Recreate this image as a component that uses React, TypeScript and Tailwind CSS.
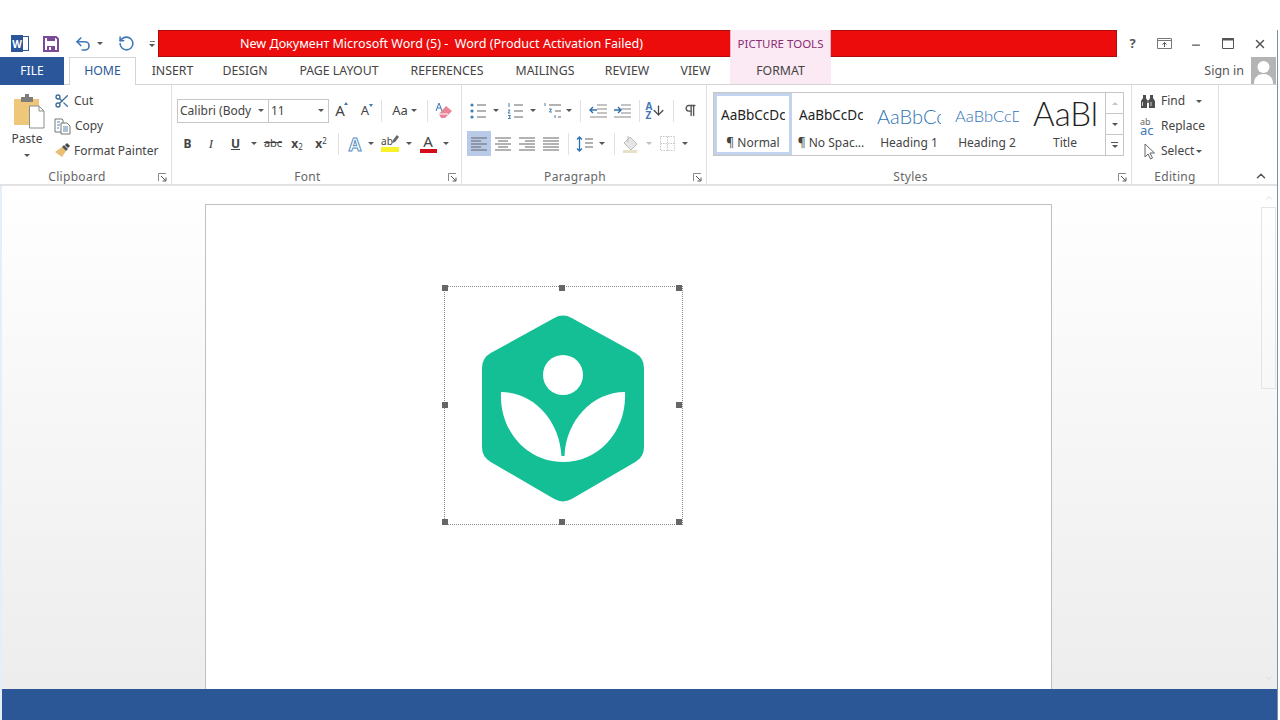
import React from 'react';
import { Undo2, RotateCcw, Minus, X, ChevronUp, ChevronDown, Scissors, Pilcrow, ArrowDown } from 'lucide-react';

const tabs = [
  { name: 'INSERT', w: 'w-[73px]' },
  { name: 'DESIGN', w: 'w-[72px]' },
  { name: 'PAGE LAYOUT', w: 'w-[116px]' },
  { name: 'REFERENCES', w: 'w-[100px]' },
  { name: 'MAILINGS', w: 'w-[96px]' },
  { name: 'REVIEW', w: 'w-[68px]' },
  { name: 'VIEW', w: 'w-[69px]' },
];

const Caret = ({ light = false }: { light?: boolean }) => (
  <span className={`inline-block h-0 w-0 border-x-[3px] border-t-[3px] border-x-transparent ${light ? 'border-t-[#c0c0c0]' : 'border-t-[#555]'}`} />
);

const Cell = ({ w, children, className = '' }: { w: string; children?: React.ReactNode; className?: string }) => (
  <div className={`flex h-[25px] shrink-0 items-center justify-center ${w} ${className}`}>{children}</div>
);

const Sep = ({ className = '' }: { className?: string }) => <div className={`h-[22px] w-px shrink-0 bg-[#e1e1e1] ${className}`} />;

const Launcher = () => (
  <svg width="9" height="9" viewBox="0 0 9 9" className="shrink-0">
    <path d="M0.5 8V0.5H8" fill="none" stroke="#8a8a8a" />
    <path d="M3 3L7.5 7.5M8 4.5V8H4.5" fill="none" stroke="#555" />
  </svg>
);

const GroupLabel = ({ label, className = '' }: { label: string; className?: string }) => (
  <div className={`relative -mb-[2px] mt-auto flex h-[18px] items-center justify-center text-[12px] tracking-[0.3px] text-[#666] ${className}`}>
    {label}
    <span className="absolute right-[4px] top-[5px] flex"><Launcher /></span>
  </div>
);

// paragraph icons, all on a 20x18 box
const Lines = ({ kind }: { kind: 'bullet' | 'number' | 'multi' | 'outdent' | 'indent' }) => (
  <svg width="20" height="18" viewBox="0 0 20 18">
    {kind === 'bullet' && (
      <>
        <circle cx="3" cy="3" r="1.6" fill="#3f7fb5" />
        <circle cx="3" cy="9" r="1.6" fill="#3f7fb5" />
        <circle cx="3" cy="15" r="1.6" fill="#3f7fb5" />
        <path d="M8 3h9M8 9h9M8 15h9" stroke="#666" strokeWidth="1.2" />
      </>
    )}
    {kind === 'number' && (
      <>
        <path d="M3 1v4M2 8h2l-2 3h2.4M2 13.5h2.4l-1 1.5 1 1.5H2" stroke="#3f7fb5" strokeWidth="1" fill="none" />
        <path d="M8 3h9M8 9h9M8 15h9" stroke="#666" strokeWidth="1.2" />
      </>
    )}
    {kind === 'multi' && (
      <>
        <path d="M2 1v3M6 7h2.5l-2 3h2.5M12 13v3" stroke="#3f7fb5" strokeWidth="1" fill="none" />
        <path d="M6 3h12M12 9h6M15 15h3" stroke="#666" strokeWidth="1.2" />
      </>
    )}
    {kind === 'outdent' && (
      <>
        <path d="M9 3h10M9 7h10M9 11h10M2 15h17" stroke="#888" strokeWidth="1.1" />
        <path d="M9 8H2M5 5L2 8l3 3" stroke="#2f6fb0" strokeWidth="1.4" fill="none" />
      </>
    )}
    {kind === 'indent' && (
      <>
        <path d="M9 3h10M9 7h10M9 11h10M2 15h17" stroke="#888" strokeWidth="1.1" />
        <path d="M2 8h7M6 5l3 3-3 3" stroke="#2f6fb0" strokeWidth="1.4" fill="none" />
      </>
    )}
  </svg>
);

const alignPaths = {
  left: 'M2 3h16M2 6h10M2 9h16M2 12h10M2 15h16',
  center: 'M2 3h16M5 6h10M2 9h16M5 12h10M2 15h16',
  right: 'M2 3h16M8 6h10M2 9h16M8 12h10M2 15h16',
  justify: 'M2 3h16M2 6h16M2 9h16M2 12h16M2 15h16',
};

const Align = ({ kind }: { kind: keyof typeof alignPaths }) => (
  <svg width="20" height="18" viewBox="0 0 20 18">
    <path d={alignPaths[kind]} stroke="#666" strokeWidth="1.1" />
  </svg>
);

const WordLogo = () => (
  <div className="relative h-[17px] w-[18px]">
    <div className="absolute right-0 top-[1px] h-[15px] w-[12px] border border-[#2b579a] bg-white" />
    <div className="absolute left-0 top-0 flex h-[17px] w-[12px] items-center justify-center bg-[#2b579a] text-[10px] font-bold leading-none text-white">W</div>
  </div>
);

const SaveIcon = () => (
  <svg width="16" height="16" viewBox="0 0 16 16">
    <path d="M1 1h12l2 2v12H1z" fill="#fff" stroke="#7a4a96" strokeWidth="2" />
    <path d="M4 1h8v4H4z" fill="#7a4a96" />
    <path d="M4 10h8v5H4z" fill="#7a4a96" />
    <path d="M6 11h2v3H6z" fill="#fff" />
  </svg>
);

const PasteIcon = () => (
  <svg width="33" height="36" viewBox="0 0 33 36">
    <path d="M1 6h25v26H1z" fill="#eec77b" />
    <path d="M8 4h4V1h4v3h4v5H8z" fill="#7d7d7d" />
    <path d="M16.5 13H26l5 5v17H16.5z" fill="#fff" stroke="#8c8c8c" />
    <path d="M26 13v5h5" fill="none" stroke="#8c8c8c" />
  </svg>
);

const CopyIcon = () => (
  <svg width="17" height="17" viewBox="0 0 17 17">
    <path d="M1 1h7l1 1v12H1z" fill="#fff" stroke="#777" />
    <path d="M7 5h6l3 3v8H7z" fill="#fff" stroke="#777" />
    <path d="M3 4h3M3 7h3M3 10h2M9 9h5M9 11h5M9 13h5" stroke="#5b84ad" />
  </svg>
);

const BrushIcon = () => (
  <svg width="17" height="16" viewBox="0 0 17 16">
    <path d="M8 4l4 4-4 6-7-5z" fill="#e8bf75" />
    <path d="M8 4l4 4 2-2-4-4z" fill="#555" />
    <path d="M11 2l2-2 3 3-2 2z" fill="#444" />
  </svg>
);

const Binoculars = () => (
  <svg width="16" height="15" viewBox="0 0 16 15">
    <path d="M3 1h3v3l1 2v8H1V7l2-3zM10 1h3v3l2 3v7H9V6l1-2z" fill="#4e4e4e" />
    <path d="M7 6h2v3H7z" fill="#777" />
    <path d="M2.5 8v4M11 8v4" stroke="#cfcfcf" />
  </svg>
);

const Cursor = () => (
  <svg width="12" height="17" viewBox="0 0 12 17">
    <path d="M1 1v13l3-3 2.5 5 2-1-2.5-5h4.5z" fill="#fff" stroke="#666" />
  </svg>
);

const Handle = ({ className }: { className: string }) => <span className={`absolute h-[6px] w-[6px] bg-[#666] ${className}`} />;

const styleItems = [
  { sample: 'AaBbCcDc', name: '¶ Normal', sampleClass: 'text-[13.5px] text-[#222]', selected: true },
  { sample: 'AaBbCcDc', name: '¶ No Spac...', sampleClass: 'text-[13.5px] text-[#222]' },
  { sample: 'AaBbCc', name: 'Heading 1', sampleClass: "font-['Lato',sans-serif] font-light text-[20px] text-[#2e74b5]" },
  { sample: 'AaBbCcD', name: 'Heading 2', sampleClass: "font-['Lato',sans-serif] font-light text-[16.5px] text-[#2e74b5]" },
  { sample: 'AaBl', name: 'Title', sampleClass: "font-['Lato',sans-serif] font-light text-[33px] -mt-[5px] text-[#222]" },
];

export default function App() {
  return (
    <div className="relative flex h-[720px] w-[1280px] flex-col overflow-hidden bg-white font-['Noto_Sans','Open_Sans',sans-serif] text-[12px] text-[#444]">
      <div className="h-[30px] shrink-0" />

      {/* title row */}
      <div className="flex h-[27px] shrink-0">
        <div className="flex w-[158px] shrink-0 items-center pl-[11px]">
          <WordLogo />
          <div className="ml-[14px]"><SaveIcon /></div>
          <Undo2 size={18} strokeWidth={2.2} className="ml-[15px] text-[#3f78b5]" />
          <span className="ml-[5px] flex"><Caret /></span>
          <RotateCcw size={17} strokeWidth={2.2} className="ml-[15px] text-[#3f78b5]" />
          <div className="ml-[14px] flex flex-col items-center gap-[2px]">
            <span className="h-px w-[5px] bg-[#777]" />
            <Caret />
          </div>
        </div>
        <div className="flex w-[959px] shrink-0 border border-[#b00c0c] bg-[#ec0c0c] text-white">
          <div className="flex w-[571px] shrink-0 items-center whitespace-pre pl-[81px] pt-px text-[12.55px]">
            New Документ Microsoft Word (5) -  Word (Product Activation Failed)
          </div>
          <div className="-my-px flex w-[101px] shrink-0 items-center justify-center border-x border-[#d9b8cf] bg-[#fbe9f3] text-[11.5px] text-[#8a2d73]">PICTURE TOOLS</div>
        </div>
        <div className="flex flex-1 items-center text-[#555]">
          <Cell w="w-[31px]"><span className="text-[13px] font-bold">?</span></Cell>
          <Cell w="w-[32px]">
            <svg width="15" height="11" viewBox="0 0 15 11"><path d="M.5.5h14v10H.5z" fill="none" stroke="#777" /><path d="M.5 2.5h14" stroke="#777" /><path d="M7.5 9V4.5M5.5 6.5l2-2 2 2" fill="none" stroke="#555" /></svg>
          </Cell>
          <Cell w="w-[31px]"><Minus size={12} strokeWidth={2.5} className="translate-y-[1px]" /></Cell>
          <Cell w="w-[33px]">
            <svg width="12" height="11" viewBox="0 0 12 11"><path d="M.5.5h11v10H.5z" fill="none" stroke="#555" /><path d="M0 1.5h12" stroke="#555" strokeWidth="2" /></svg>
          </Cell>
          <Cell w="w-[31px]"><X size={14} strokeWidth={2.5} /></Cell>
        </div>
      </div>

      {/* tabs */}
      <div className="flex h-[28px] shrink-0 border-b border-[#d4d4d4] text-[12.3px]">
        <div className="flex h-[28px] w-[64px] items-center justify-center bg-[#2b579a] text-[12px] text-white">FILE</div>
        <div className="z-10 ml-[5px] flex h-[28px] w-[67px] items-center justify-center border-x border-t border-[#d4d4d4] bg-white text-[#2b579a]">HOME</div>
        {tabs.map((t) => (
          <div key={t.name} className={`flex items-center justify-center pt-px text-[#444] ${t.w}`}>{t.name}</div>
        ))}
        <div className="flex h-[27px] w-[101px] items-center justify-center bg-[#fbe9f3] pt-[2px] text-[#444]">FORMAT</div>
        <div className="flex flex-1 items-center justify-end">
          <span className="mr-[7px] pt-[2px] text-[12.5px] text-[#555]">Sign in</span>
          <div className="mr-[4px] h-[27px] w-[25px] overflow-hidden bg-[#b4b4b4]">
            <svg width="25" height="27" viewBox="0 0 25 27"><circle cx="12.5" cy="10" r="6" fill="#fff" /><path d="M3 27c0-7 4-10 9.5-10S22 20 22 27z" fill="#fff" /></svg>
          </div>
        </div>
      </div>

      {/* ribbon */}
      <div className="flex h-[101px] shrink-0 border-b-2 border-[#e2e2e2]">
        {/* clipboard */}
        <div className="flex w-[172px] shrink-0 flex-col border-r border-[#e1e1e1]">
          <div className="flex">
            <div className="flex w-[54px] shrink-0 flex-col items-center pt-[8px]">
              <span className="ml-[5px] flex"><PasteIcon /></span>
              <span className="mt-[2px] leading-[16px]">Paste</span>
              <span className="mt-[7px] flex"><Caret /></span>
            </div>
            <div className="flex flex-col gap-[5px] pt-[6px]">
              <div className="flex h-[20px] items-center gap-[4px]"><Scissors size={16} className="text-[#3e6c9a]" /><span>Cut</span></div>
              <div className="flex h-[20px] items-center gap-[4px]"><CopyIcon /><span>Copy</span></div>
              <div className="flex h-[20px] items-center gap-[3px]"><BrushIcon /><span>Format Painter</span></div>
            </div>
          </div>
          <GroupLabel label="Clipboard" className="pr-[17px]" />
        </div>

        {/* font */}
        <div className="flex w-[290px] shrink-0 flex-col border-r border-[#e1e1e1]">
          <div className="flex items-center pl-[5px] pt-[13px]">
            <div className="flex h-[24px] w-[92px] shrink-0 items-center justify-between border border-[#c6c6c6] pl-[2px] pr-[4px]">Calibri (Body<Caret /></div>
            <div className="-ml-px flex h-[24px] w-[61px] shrink-0 items-center justify-between border border-[#c6c6c6] pl-[2px] pr-[4px]">11<Caret /></div>
            <Cell w="w-[24px]"><span className="relative -translate-x-[1px] text-[15px]">A<span className="absolute -right-[3px] top-[3px] h-0 w-0 border-x-[2.5px] border-b-[3px] border-x-transparent border-b-[#3f78b5]" /></span></Cell>
            <Cell w="w-[24px]"><span className="relative text-[13px]">A<span className="absolute -right-[4px] top-[3px] h-0 w-0 border-x-[2.5px] border-t-[3px] border-x-transparent border-t-[#3f78b5]" /></span></Cell>
            <Sep className="ml-[4px]" />
            <Cell w="w-[33px]" className="ml-[6px] gap-[3px]"><span className="text-[13px]">Aa</span><Caret /></Cell>
            <Sep className="ml-[6px]" />
            <Cell w="w-[32px]">
              <svg width="18" height="17" viewBox="0 0 18 17"><path d="M4 12L11 4l6 5-7 7H6z" fill="#e98598" /><path d="M4 12h9" stroke="#fff" /><path d="M1 9L4 1l3 8M2 6h4" fill="none" stroke="#3f78b5" /></svg>
            </Cell>
          </div>
          <div className="mt-[8px] flex items-center pl-[4px]">
            <Cell w="w-[23px]"><b>B</b></Cell>
            <Cell w="w-[24px]"><i className="font-['Liberation_Serif',serif] text-[13px]">I</i></Cell>
            <Cell w="w-[25px]"><b className="underline">U</b></Cell>
            <Cell w="w-[12px]"><Caret /></Cell>
            <Cell w="w-[24px]" className="ml-px"><span className="text-[11px] line-through">abc</span></Cell>
            <Cell w="w-[24px]"><b className="text-[12px]">x<sub className="text-[8px] font-normal">2</sub></b></Cell>
            <Cell w="w-[24px]"><b className="text-[12px]">x<sup className="text-[8px] font-normal">2</sup></b></Cell>
            <Sep className="ml-[5px]" />
            <Cell w="w-[22px]" className="ml-[5px]"><span className="text-[18px] font-bold leading-none text-white [-webkit-text-stroke:1px_#5b8fc4]">A</span></Cell>
            <Cell w="w-[10px]"><Caret /></Cell>
            <Cell w="w-[22px]" className="relative ml-[3px] flex-col">
              <span className="-ml-[6px] text-[10px] leading-[12px]">ab</span>
              <svg width="9" height="10" viewBox="0 0 9 10" className="absolute right-[1px] top-[3px]"><path d="M1 9l1-3 4-5 2 2-4 5z" fill="#666" /></svg>
              <span className="h-[5px] w-[18px] bg-[#f9f229]" />
            </Cell>
            <Cell w="w-[10px]" className="ml-[3px]"><Caret /></Cell>
            <Cell w="w-[20px]" className="ml-[4px] flex-col">
              <span className="text-[15px] leading-[15px]">A</span>
              <span className="h-[4px] w-[17px] bg-[#d60d18]" />
            </Cell>
            <Cell w="w-[10px]" className="ml-[3px]"><Caret /></Cell>
          </div>
          <GroupLabel label="Font" className="pr-[18px]" />
        </div>

        {/* paragraph */}
        <div className="flex w-[245px] shrink-0 flex-col border-r border-[#e1e1e1]">
          <div className="flex items-center pl-[6px] pt-[13px]">
            <Cell w="w-[21px]"><Lines kind="bullet" /></Cell>
            <Cell w="w-[10px]" className="ml-[2px]"><Caret /></Cell>
            <Cell w="w-[21px]" className="ml-[4px]"><Lines kind="number" /></Cell>
            <Cell w="w-[10px]" className="ml-[2px]"><Caret /></Cell>
            <Cell w="w-[21px]" className="ml-[4px]"><Lines kind="multi" /></Cell>
            <Cell w="w-[10px]" className="ml-[1px]"><Caret /></Cell>
            <Sep className="ml-[6px]" />
            <Cell w="w-[24px]" className="ml-[5px]"><Lines kind="outdent" /></Cell>
            <Cell w="w-[24px]"><Lines kind="indent" /></Cell>
            <Sep className="ml-[5px]" />
            <Cell w="w-[32px]">
              <span className="flex flex-col text-[10px] font-bold leading-[9px] text-[#3f78b5]"><span>A</span><span>Z</span></span>
              <ArrowDown size={15} className="-ml-[1px]" />
            </Cell>
            <Sep className="ml-px" />
            <Cell w="w-[32px]"><Pilcrow size={15} strokeWidth={2.2} className="text-[#555]" /></Cell>
          </div>
          <div className="mt-[8px] flex items-center pl-[5px]">
            <Cell w="w-[24px]" className="bg-[#b9cae8]"><Align kind="left" /></Cell>
            <Cell w="w-[24px]"><Align kind="center" /></Cell>
            <Cell w="w-[24px]"><Align kind="right" /></Cell>
            <Cell w="w-[24px]"><Align kind="justify" /></Cell>
            <Sep className="ml-[5px]" />
            <Cell w="w-[20px]" className="ml-[6px]">
              <svg width="18" height="20" viewBox="0 0 18 20"><path d="M3.5 3v14M1 5.5L3.5 3 6 5.5M1 14.5L3.5 17 6 14.5" fill="none" stroke="#2f6fb0" strokeWidth="1.3" /><path d="M9 5h8M9 9h8M9 13h8" stroke="#666" strokeWidth="1.2" /></svg>
            </Cell>
            <Cell w="w-[10px]" className="ml-[2px]"><Caret /></Cell>
            <Sep className="ml-[7px]" />
            <Cell w="w-[22px]" className="ml-[5px]">
              <svg width="19" height="18" viewBox="0 0 19 18"><path d="M8 2l7 7-6 6-7-7z" fill="#e5e5e5" stroke="#bdbdbd" /><path d="M6 1v6" stroke="#bdbdbd" /><path d="M1 15h14v3H1z" fill="#e5e1c9" /></svg>
            </Cell>
            <Cell w="w-[10px]" className="ml-[2px]"><Caret light /></Cell>
            <Cell w="w-[22px]" className="ml-[2px]">
              <svg width="15" height="15" viewBox="0 0 15 15"><path d="M.5.5h14v14H.5zM.5 7.500h14M7.500.5v14" fill="none" stroke="#c8c8c8" strokeDasharray="1.5 1" /></svg>
            </Cell>
            <Cell w="w-[10px]" className="ml-[2px]"><Caret /></Cell>
          </div>
          <GroupLabel label="Paragraph" className="pr-[18px]" />
        </div>

        {/* styles */}
        <div className="flex w-[425px] shrink-0 flex-col border-r border-[#e1e1e1]">
          <div className="ml-[6px] mt-[7px] flex h-[64px] w-[411px] border border-[#c6c6c6]">
            {styleItems.map((s) => (
              <div
                key={s.name}
                className={`flex h-full w-[78px] shrink-0 flex-col items-center overflow-hidden border-[3px] ${s.selected ? 'border-[#c3d3ed]' : 'border-transparent'}`}
              >
                <div className="flex h-[35px] w-[64px] items-center overflow-hidden whitespace-nowrap pt-[5px]">
                  <span className={`leading-none ${s.sampleClass}`}>{s.sample}</span>
                </div>
                <span className="mt-[3px] whitespace-nowrap leading-[17px]">{s.name}</span>
              </div>
            ))}
            <div className="ml-auto flex w-[18px] shrink-0 flex-col border-l border-[#c6c6c6]">
              <div className="flex h-[21px] items-center justify-center border-b border-[#c6c6c6]">
                <span className="h-0 w-0 border-x-[3px] border-b-[3px] border-x-transparent border-b-[#c6c6c6]" />
              </div>
              <div className="flex h-[21px] items-center justify-center border-b border-[#c6c6c6]"><Caret /></div>
              <div className="flex flex-1 flex-col items-center justify-center gap-[2px]">
                <span className="h-px w-[7px] bg-[#555]" />
                <Caret />
              </div>
            </div>
          </div>
          <GroupLabel label="Styles" className="pr-[17px]" />
        </div>

        {/* editing */}
        <div className="flex w-[87px] shrink-0 flex-col border-r border-[#e1e1e1]">
          <div className="flex flex-col gap-[5px] pl-[8px] pt-[6px]">
            <div className="flex h-[20px] items-center gap-[5px]"><Binoculars /><span>Find</span><span className="ml-[6px] flex"><Caret /></span></div>
            <div className="flex h-[20px] items-center">
              <span className="flex w-[21px] shrink-0 flex-col leading-[9px]">
                <span className="text-[9px] text-[#666]">ab</span>
                <span className="text-[13px] text-[#3f78b5]">ac</span>
              </span>
              <span>Replace</span>
            </div>
            <div className="flex h-[20px] items-center pl-[4px]">
              <span className="flex w-[17px] shrink-0"><Cursor /></span>
              <span className="flex items-center gap-[2px]">Select<Caret /></span>
            </div>
          </div>
          <div className="-mb-[2px] mt-auto flex h-[18px] items-center justify-center text-[12px] tracking-[0.3px] text-[#666]">Editing</div>
        </div>

        <div className="flex flex-1 items-end justify-end pb-[1px] pr-[12px]">
          <ChevronUp size={14} strokeWidth={2.5} className="text-[#555]" />
        </div>
      </div>

      {/* document area */}
      <div className="flex min-h-0 flex-1 bg-gradient-to-b from-white to-[#ededed] pl-[205px] pt-[18px]">
        <div className="h-[600px] w-[847px] shrink-0 border border-[#c0c0c0] bg-white pl-[238px] pt-[81px]">
          <div className="relative h-[239px] w-[239px] border border-dotted border-[#888]">
            <svg width="237" height="237" viewBox="1 1 237 237" className="block">
              <path
                d="M110.3 31.9Q119 27 127.7 31.9L191.3 67.1Q200 72 200 82V161Q200 171 191.3 175.9L127.7 213.1Q119 218 110.3 213.1L46.7 175.9Q38 171 38 161V82Q38 72 46.7 67.1Z"
                fill="#14bf96"
              />
              <circle cx="119" cy="89" r="20" fill="#fff" />
              <path d="M57 106C90 106 116 135 117.5 170L120.5 170C122 135 148 106 181 106C183 145 155 176 119 176C83 176 55 145 57 106Z" fill="#fff" />
            </svg>
            <Handle className="left-[-3px] top-[-2px]" />
            <Handle className="left-[114px] top-[-2px]" />
            <Handle className="left-[231px] top-[-2px]" />
            <Handle className="left-[-3px] top-[115px]" />
            <Handle className="left-[231px] top-[115px]" />
            <Handle className="left-[-3px] top-[232px]" />
            <Handle className="left-[114px] top-[232px]" />
            <Handle className="left-[231px] top-[232px]" />
          </div>
        </div>
        <div className="ml-[209px] flex w-[15px] shrink-0 flex-col items-center">
          <ChevronUp size={10} className="-mt-[11px] text-[#d4d4d4]" />
          <div className="mt-[4px] h-[182px] w-full border border-[#e4e4e4]" />
          <ChevronDown size={10} className="mb-[6px] mt-auto text-[#d4d4d4]" />
        </div>
      </div>

      <div className="h-[31px] shrink-0 bg-[#2b5797]" />

      {/* window edges */}
      <div className="absolute bottom-0 left-0 top-[186px] w-[2px] bg-[#e6eef8]" />
      <div className="absolute bottom-0 right-[2px] top-[30px] w-px bg-[#7f8fa8]" />
      <div className="absolute bottom-0 right-0 top-0 w-[2px] bg-white" />
    </div>
  );
}
